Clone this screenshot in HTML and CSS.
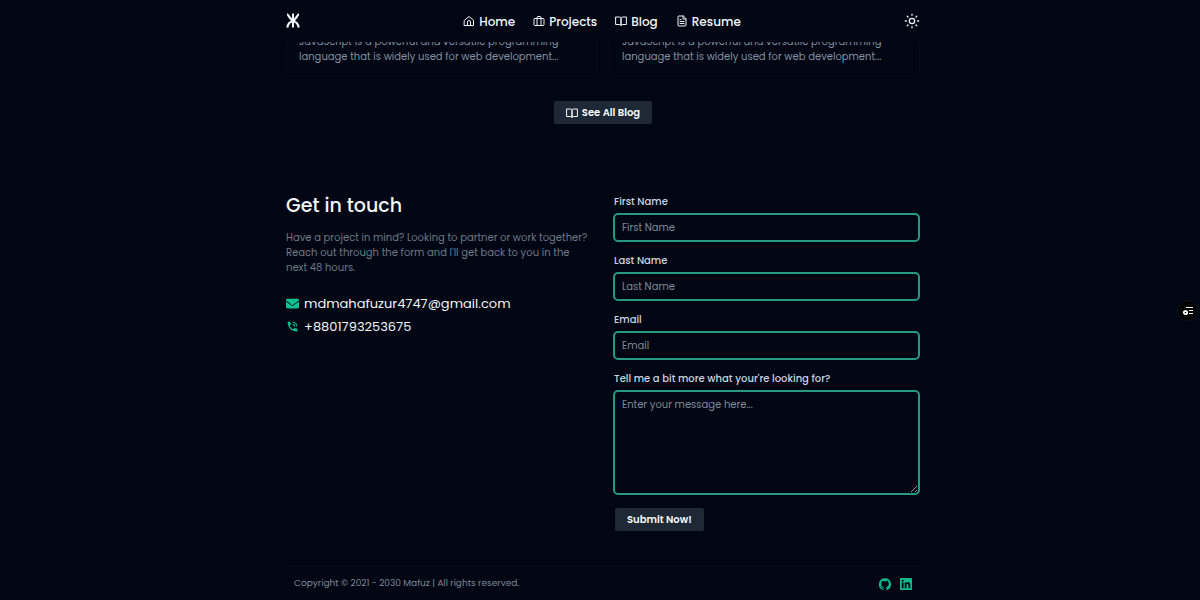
FILE: index.html
```html
<!DOCTYPE html>
<html lang="en">
<head>
  <meta charset="UTF-8">
  <meta name="viewport" content="width=device-width, initial-scale=1.0">
  <title>Mafuz | Portfolio</title>
  <link rel="stylesheet" href="styles.css">
</head>
<body>
  <header class="header">
    <div class="container nav">
      <a href="#" class="logo" aria-label="Mafuz">
        <svg width="14" height="16" viewBox="0 0 14 16" fill="none" stroke="currentColor">
          <path d="M7 .5v14" stroke-width="2"/>
          <path d="M1 1.300C3 1.300 3 6.500 7 6.500s4-5.200 6-5.200M1.200 14.500C2 10.500 4 8.500 7 8.500s5 2 5.800 6M4.500 7.500h5" stroke-width="2.200"/>
        </svg>
      </a>
      <nav class="nav-links">
        <a href="#">
          <svg class="icon" viewBox="0 0 24 24"><path d="M3 10.500 12 3l9 7.500V21H3z"/><path d="M9 21v-7a3 3 0 0 1 6 0v7"/></svg>
          Home
        </a>
        <a href="#">
          <svg class="icon" viewBox="0 0 24 24"><rect x="2" y="7" width="20" height="14" rx="2"/><path d="M8 21V5a2 2 0 0 1 2-2h4a2 2 0 0 1 2 2v16"/></svg>
          Projects
        </a>
        <a href="#">
          <svg class="icon" viewBox="0 0 24 24"><path d="M2 4h7a3 3 0 0 1 3 3v14a3 3 0 0 0-3-2H2zM22 4h-7a3 3 0 0 0-3 3v14a3 3 0 0 1 3-2h7z"/></svg>
          Blog
        </a>
        <a href="#">
          <svg class="icon" viewBox="0 0 24 24"><path d="M14 2H6a2 2 0 0 0-2 2v16a2 2 0 0 0 2 2h12a2 2 0 0 0 2-2V8zM14 2v6h6M8 9h2M8 13h8M8 17h8"/></svg>
          Resume
        </a>
      </nav>
      <button class="theme-btn" type="button" aria-label="Toggle theme">
        <svg class="icon" viewBox="0 0 24 24"><circle cx="12" cy="12" r="4"/><path d="M12 2v1.500M12 20.500V22M2 12h1.500M20.500 12H22M4.900 4.900 6 6M18 18l1.100 1.100M4.900 19.100 6 18M18 6l1.100-1.100"/></svg>
      </button>
    </div>
  </header>

  <main class="container">
    <section class="blog">
      <div class="cards">
        <article class="card">
          <p>JavaScript is a powerful and versatile programming<br>language that is widely used for web development...</p>
        </article>
        <article class="card">
          <p>JavaScript is a powerful and versatile programming<br>language that is widely used for web development...</p>
        </article>
      </div>
      <a href="#" class="btn">
        <svg class="icon" viewBox="0 0 24 24"><path d="M2 4h7a3 3 0 0 1 3 3v14a3 3 0 0 0-3-2H2zM22 4h-7a3 3 0 0 0-3 3v14a3 3 0 0 1 3-2h7z"/></svg>
        See All Blog
      </a>
    </section>

    <section class="contact">
      <div class="contact-info">
        <h2>Get in touch</h2>
        <p>Have a project in mind? Looking to partner or work together? Reach out through the form and I'll get back to you in the next 48 hours.</p>
        <ul>
          <li>
            <svg viewBox="0 0 512 512"><path d="M48 64a48 48 0 0 0-29 86l218 164c11 8 27 8 38 0l218-164a48 48 0 0 0-29-86zM0 176v208c0 35 29 64 64 64h384c35 0 64-29 64-64V176L294 339a64 64 0 0 1-76 0z"/></svg>
            <a href="mailto:mdmahafuzur4747@gmail.com">mdmahafuzur4747@gmail.com</a>
          </li>
          <li>
            <svg viewBox="0 0 24 24"><path d="M20 15.500c-1.200 0-2.400-.2-3.600-.6-.3-.1-.7 0-1 .2l-2.200 2.200a15 15 0 0 1-6.600-6.600l2.200-2.200c.3-.3.4-.7.300-1C8.700 6.400 8.500 5.200 8.500 4c0-.6-.5-1-1-1H4c-.6 0-1 .5-1 1 0 9.400 7.600 17 17 17 .5 0 1-.5 1-1v-3.500c0-.5-.5-1-1-1zM19 12h2a9 9 0 0 0-9-9v2a7 7 0 0 1 7 7zm-4 0h2a5 5 0 0 0-5-5v2a3 3 0 0 1 3 3z"/></svg>
            <a href="tel:+8801793253675">+8801793253675</a>
          </li>
        </ul>
      </div>

      <form class="contact-form">
        <div class="field">
          <label for="firstName">First Name</label>
          <input type="text" id="firstName" placeholder="First Name">
        </div>
        <div class="field">
          <label for="lastName">Last Name</label>
          <input type="text" id="lastName" placeholder="Last Name">
        </div>
        <div class="field">
          <label for="email">Email</label>
          <input type="email" id="email" placeholder="Email">
        </div>
        <div class="field">
          <label for="message">Tell me a bit more what your're looking for?</label>
          <textarea id="message" placeholder="Enter your message here..."></textarea>
        </div>
        <button class="btn" type="submit">Submit Now!</button>
      </form>
    </section>
  </main>

  <footer class="container">
    <div class="footer">
      <p>Copyright © 2021 - 2030 Mafuz | All rights reserved.</p>
      <div class="social">
        <a href="#" aria-label="GitHub">
          <svg viewBox="0 0 24 24"><path d="M12 .5a12 12 0 0 0-3.800 23.400c.6.1.8-.3.800-.6v-2.200c-3.300.7-4-1.400-4-1.400-.6-1.400-1.400-1.800-1.400-1.800-1-.7.1-.7.1-.7 1.200.1 1.900 1.200 1.900 1.200 1 1.900 2.800 1.300 3.500 1 .1-.8.4-1.300.8-1.600-2.700-.3-5.500-1.300-5.500-5.900 0-1.300.5-2.400 1.200-3.200-.1-.3-.5-1.500.1-3.200 0 0 1-.3 3.300 1.200a11.500 11.500 0 0 1 6 0C17.300 5.200 18.300 5.500 18.300 5.500c.7 1.700.2 2.900.1 3.200.8.8 1.200 1.900 1.200 3.200 0 4.600-2.800 5.600-5.500 5.900.4.4.8 1.100.8 2.200v3.300c0 .3.200.7.800.6A12 12 0 0 0 12 .5z"/></svg>
        </a>
        <a href="#" aria-label="LinkedIn">
          <svg viewBox="0 0 24 24"><path fill-rule="evenodd" d="M1 0h22a1 1 0 0 1 1 1v22a1 1 0 0 1-1 1H1a1 1 0 0 1-1-1V1a1 1 0 0 1 1-1zm2.500 9v11.500h3.600V9zm1.800-5.700a2.100 2.100 0 1 0 0 4.200 2.100 2.100 0 0 0 0-4.200zM9.400 9v11.500H13v-5.700c0-1.500.3-3 2.200-3s1.800 1.700 1.800 3v5.700h3.600v-6.300c0-3.100-.7-5.500-4.300-5.500-1.700 0-2.900 1-3.400 1.900V9z"/></svg>
        </a>
      </div>
    </div>
  </footer>

  <button class="widget" type="button" aria-label="Open panel">
    <svg width="12" height="12" viewBox="0 0 12 12" fill="none" stroke="currentColor">
      <path d="M4 2.500h7M7 5.500h4M7 8.500h4" stroke-width="1.200"/>
      <circle cx="3.500" cy="7.500" r="1.700" stroke-width="1.800"/>
    </svg>
  </button>
</body>
</html>
```
FILE: styles.css
```css
* {
  box-sizing: border-box;
  margin: 0;
  padding: 0;
}
body {
  background: #000613;
  color: #f1f5f9;
  font-family: Poppins, Inter, sans-serif;
  font-size: 10px;
  line-height: 15px;
}
a {
  color: inherit;
  text-decoration: none;
}
.container {
  max-width: 640px;
  margin: 0 auto;
  padding-left: 6px;
}
.icon {
  width: 12px;
  height: 12px;
  fill: none;
  stroke: currentColor;
  stroke-width: 2;
  stroke-linecap: round;
  stroke-linejoin: round;
}

/* header */
.header {
  position: sticky;
  top: 0;
  z-index: 10;
  background: #000613;
}
.nav {
  display: flex;
  align-items: center;
  justify-content: space-between;
  height: 42px;
}
.logo {
  display: flex;
}
.nav-links {
  display: flex;
  gap: 18px;
  font-size: 12px;
  font-weight: 500;
}
.nav-links a {
  display: flex;
  align-items: center;
  gap: 4px;
}
.theme-btn {
  display: flex;
  background: none;
  border: none;
  color: inherit;
  cursor: pointer;
}
.theme-btn .icon {
  width: 16px;
  height: 16px;
}

/* blog */
.blog {
  display: flex;
  flex-direction: column;
  align-items: center;
  gap: 25px;
  margin-top: -25px;
}
.cards {
  display: grid;
  grid-template-columns: 1fr 1fr;
  gap: 12px;
  width: 100%;
}
.card {
  padding: 16px 12px 11px;
  border: 1px solid #040c19;
  border-radius: 4px;
  color: #8490a0;
}
.btn {
  display: flex;
  align-items: center;
  gap: 4px;
  padding: 4px 12px;
  border: none;
  border-radius: 2px;
  background: #1e2935;
  color: #f8fafc;
  font: inherit;
  font-weight: 600;
  cursor: pointer;
}

/* contact */
.contact {
  display: grid;
  grid-template-columns: 1fr 1fr;
  gap: 20px;
  margin-top: 70px;
}
.contact-info h2 {
  font-size: 19px;
  font-weight: 500;
  line-height: 24px;
  margin-bottom: 12px;
}
.contact-info p {
  color: #6f7988;
}
.contact-info ul {
  list-style: none;
  margin-top: 17px;
  font-size: 13px;
  line-height: 23px;
}
.contact-info li {
  display: flex;
  align-items: center;
  gap: 5px;
}
.contact-info svg {
  width: 13px;
  height: 13px;
  fill: #10c08e;
}
.contact-form {
  display: flex;
  flex-direction: column;
  align-items: flex-start;
  gap: 11px;
}
.field {
  display: flex;
  flex-direction: column;
  gap: 4px;
  width: 100%;
}
.field label {
  padding-left: 1px;
  color: #cbd5e1;
  font-weight: 500;
}
.field input,
.field textarea {
  width: 100%;
  height: 29px;
  padding: 5px 7px;
  border: 2px solid #27997f;
  border-radius: 5px;
  background: transparent;
  color: #f1f5f9;
  font: inherit;
}
.field textarea {
  display: block;
  height: 105px;
}
.field ::placeholder {
  color: #808a98;
  opacity: 1;
}
.contact-form .btn {
  margin: 2px 0 0 2px;
}

/* footer */
.footer {
  display: flex;
  align-items: center;
  justify-content: space-between;
  height: 34px;
  margin-top: 35px;
  padding: 0 8px;
  border-top: 1px solid #060d18;
  color: #7f8998;
  font-size: 9px;
}
.social {
  display: flex;
  gap: 9px;
}
.social a {
  display: flex;
}
.social svg {
  width: 12px;
  height: 12px;
  fill: #10b98a;
}

.widget {
  position: fixed;
  top: 300px;
  right: 2px;
  display: flex;
  align-items: center;
  justify-content: center;
  width: 21px;
  height: 21px;
  border: 1px solid #11151c;
  border-radius: 50%;
  background: #000;
  color: #fff;
  cursor: pointer;
}
```
